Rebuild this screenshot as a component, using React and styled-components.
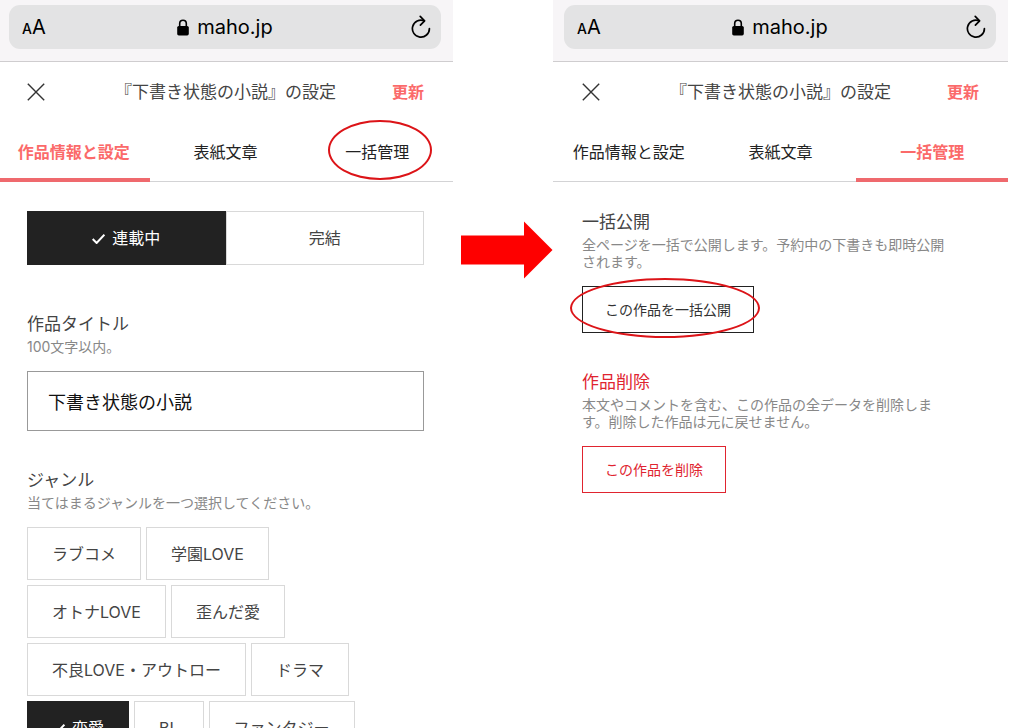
import React from 'react'
import styled, { createGlobalStyle, css } from 'styled-components'

const GlobalStyle = createGlobalStyle`
  * {
    box-sizing: border-box;
  }

  body {
    margin: 0;
    background: #fff;
    color: #444;
    font-family: Inter, 'Noto Sans CJK JP', sans-serif;
  }

  button,
  input {
    margin: 0;
    font-family: inherit;
  }
`

const Page = styled.div`
  display: grid;
  grid-template-columns: 453fr 100px 455fr;
  height: 100vh;
  padding-right: 7px;
  overflow: hidden;
`

const Phone = styled.section`
  min-width: 0;
  overflow: hidden;
`

const Screen = styled.div`
  margin-left: ${props => (props.$bleed ? '-2px' : '0')};
`

const BrowserBar = styled.div`
  padding: 5px 12px 12px 11px;
  background: #f7f5f7;
  border-bottom: 1px solid #cfcdcf;
`

const AddressBar = styled.div`
  display: grid;
  grid-template-columns: 1fr auto 1fr;
  align-items: center;
  height: 44px;
  padding: 0 10px 0 13px;
  border-radius: 11px;
  background: #e3e3e4;
  color: #000;
`

const BarButton = styled.button`
  display: flex;
  align-items: baseline;
  justify-self: ${props => (props.$end ? 'end' : 'start')};
  padding: ${props => (props.$end ? '0' : '2px 0 0')};
  border: 0;
  background: none;
  color: inherit;
  font-size: 20px;
  line-height: 24px;

  small {
    font-size: 14px;
    font-weight: 500;
  }
`

const Site = styled.span`
  display: flex;
  align-items: center;
  gap: 8px;
  padding-right: 3px;
  font-size: 20px;
  line-height: 24px;
`

const Header = styled.header`
  display: grid;
  grid-template-columns: 1fr auto 1fr;
  align-items: center;
  height: 60px;
  padding: 0 29px;
`

const Title = styled.h1`
  margin: 0;
  font-size: 17px;
  font-weight: 400;
  line-height: 24px;
`

const CloseButton = styled.button`
  display: flex;
  justify-self: start;
  padding: 0;
  border: 0;
  background: none;
  color: #333;
`

const UpdateButton = styled.button`
  justify-self: end;
  padding: 0;
  border: 0;
  background: none;
  color: #fb6a6a;
  font-size: 16px;
  font-weight: 700;
  line-height: 24px;
`

const TabList = styled.nav`
  display: grid;
  grid-template-columns: repeat(3, 1fr);
  height: 60px;
  box-shadow: inset 0 -1px #d3d3d5;
`

const Tab = styled.button`
  position: relative;
  padding: 4px 0 0;
  border: 0;
  border-bottom: 4px solid ${props => (props.$active ? '#ef696d' : 'transparent')};
  background: none;
  color: ${props => (props.$active ? '#fb6a6a' : '#222')};
  font-size: 16px;
  font-weight: ${props => (props.$active ? 700 : 400)};
  line-height: 24px;
`

const Ring = styled.span`
  position: absolute;
  inset: ${props => props.$inset};
  border: 2px solid #dc1418;
  border-radius: 50%;
  pointer-events: none;
`

const Content = styled.main`
  padding: ${props => props.$top} 29px 0;
`

const Segments = styled.div`
  display: grid;
  grid-template-columns: 1fr 1fr;
  margin-bottom: 47px;
`

const choice = css`
  display: flex;
  align-items: center;
  justify-content: center;
  gap: 7px;
  border: 1px solid ${props => (props.$selected ? '#222' : '#d9d9d9')};
  background: ${props => (props.$selected ? '#222' : '#fff')};
  color: ${props => (props.$selected ? '#fff' : '#444')};
  font-size: 16px;
  font-weight: 400;
  line-height: 24px;
`

const Segment = styled.button`
  ${choice}
  height: 54px;
  padding: 0;
`

const Chip = styled.button`
  ${choice}
  height: 53px;
  padding: 0 24px;
`

const ChipList = styled.div`
  display: flex;
  flex-wrap: wrap;
  gap: 5px;
  padding-right: 36px;
`

const Field = styled.div`
  margin-bottom: 37px;
`

const Label = styled.label`
  display: block;
  font-size: 17px;
  font-weight: 400;
  line-height: 24px;
`

const Heading = styled.h2`
  margin: 0;
  color: ${props => (props.$danger ? '#e0242f' : '#444')};
  font-size: 17px;
  font-weight: 400;
  line-height: 24px;
`

const Hint = styled.p`
  margin: 2px 0 16px;
  color: #888;
  font-size: 14px;
  line-height: 17px;
  white-space: nowrap;
`

const TextInput = styled.input`
  display: block;
  width: 100%;
  height: 60px;
  padding: 0 20px;
  border: 1px solid #999;
  border-radius: 0;
  background: #fff;
  color: #111;
  font-size: 18px;
`

const ActionButton = styled.button`
  display: block;
  position: relative;
  height: 47px;
  padding: 0 22px;
  border: 1px solid ${props => (props.$danger ? '#e0242f' : '#222')};
  background: #fff;
  color: ${props => (props.$danger ? '#e0242f' : '#333')};
  font-size: 14px;
  line-height: 24px;
`

const ArrowColumn = styled.div`
  display: flex;
  align-items: flex-start;
  justify-content: center;
  padding: 221px 0 0 8px;
`

const LockIcon = () => (
  <svg width="12" height="17" viewBox="0 0 12 17" aria-hidden="true">
    <path d="M2.7 8V4.6a3.3 3.3 0 0 1 6.6 0V8" fill="none" stroke="currentColor" strokeWidth="1.6" />
    <rect x="0.2" y="7" width="11.6" height="9.4" rx="1.6" fill="currentColor" />
  </svg>
)

const ReloadIcon = () => (
  <svg width="20" height="24" viewBox="0 0 20 24" fill="none" stroke="currentColor" strokeWidth="1.7" strokeLinecap="round" strokeLinejoin="round" aria-hidden="true">
    <path d="M18.4 13.6A8.5 8.5 0 1 1 13.2 5.8" />
    <path d="M9.2 1.4L13.6 5.8L9.4 10.2" />
  </svg>
)

const CloseIcon = () => (
  <svg width="18" height="18" viewBox="0 0 18 18" stroke="currentColor" strokeWidth="1.4" aria-hidden="true">
    <path d="M0.8 0.8L17.2 17.2M17.2 0.8L0.8 17.2" />
  </svg>
)

const CheckIcon = () => (
  <svg width="13" height="12" viewBox="0 0 13 12" fill="none" stroke="currentColor" strokeWidth="2" aria-hidden="true">
    <path d="M0.7 7L4.6 11L12.4 2.6" />
  </svg>
)

const Arrow = () => (
  <svg width="92" height="58" viewBox="0 0 92 58" aria-hidden="true">
    <path d="M0 14.5H63V0.5L91.5 29L63 57.5V43.5H0Z" fill="#fe0000" />
  </svg>
)

const tabs = ['作品情報と設定', '表紙文章', '一括管理']
const genres = [
  'ラブコメ',
  '学園LOVE',
  'オトナLOVE',
  '歪んだ愛',
  '不良LOVE・アウトロー',
  'ドラマ',
  '恋愛',
  'BL',
  'ファンタジー',
]

const PhoneScreen = ({ bleed, active, ringed, children }) => (
  <Phone>
    <Screen $bleed={bleed}>
      <BrowserBar>
        <AddressBar>
          <BarButton aria-label="表示設定">
            <small>A</small>A
          </BarButton>
          <Site>
            <LockIcon />
            maho.jp
          </Site>
          <BarButton $end aria-label="再読み込み">
            <ReloadIcon />
          </BarButton>
        </AddressBar>
      </BrowserBar>
      <Header>
        <CloseButton aria-label="閉じる">
          <CloseIcon />
        </CloseButton>
        <Title>『下書き状態の小説』の設定</Title>
        <UpdateButton>更新</UpdateButton>
      </Header>
      <TabList>
        {tabs.map(tab => (
          <Tab key={tab} $active={tab === active}>
            {tab}
            {tab === ringed && <Ring $inset="-2px 21px -2px 27px" />}
          </Tab>
        ))}
      </TabList>
      {children}
    </Screen>
  </Phone>
)

const WorkSettings = () => {
  const [status, setStatus] = React.useState('連載中')
  const [title, setTitle] = React.useState('下書き状態の小説')
  const [genre, setGenre] = React.useState('恋愛')
  return (
    <Content $top="29px">
      <Segments>
        {['連載中', '完結'].map(name => (
          <Segment
            key={name}
            $selected={name === status}
            aria-pressed={name === status}
            onClick={() => setStatus(name)}
          >
            {name === status && <CheckIcon />}
            {name}
          </Segment>
        ))}
      </Segments>
      <Field>
        <Label htmlFor="work-title">作品タイトル</Label>
        <Hint>100文字以内。</Hint>
        <TextInput id="work-title" value={title} onChange={e => setTitle(e.target.value)} />
      </Field>
      <Field>
        <Heading id="genre">ジャンル</Heading>
        <Hint>当てはまるジャンルを一つ選択してください。</Hint>
        <ChipList role="group" aria-labelledby="genre">
          {genres.map(name => (
            <Chip
              key={name}
              $selected={name === genre}
              aria-pressed={name === genre}
              onClick={() => setGenre(name)}
            >
              {name === genre && <CheckIcon />}
              {name}
            </Chip>
          ))}
        </ChipList>
      </Field>
    </Content>
  )
}

const BulkSettings = () => (
  <Content $top="28px">
    <Field>
      <Heading>一括公開</Heading>
      <Hint>
        全ページを一括で公開します。予約中の下書きも即時公開
        <br />
        されます。
      </Hint>
      <ActionButton>
        この作品を一括公開
        <Ring $inset="-9px -7px -6px -13px" />
      </ActionButton>
    </Field>
    <Field>
      <Heading $danger>作品削除</Heading>
      <Hint>
        本文やコメントを含む、この作品の全データを削除しま
        <br />
        す。削除した作品は元に戻せません。
      </Hint>
      <ActionButton $danger>この作品を削除</ActionButton>
    </Field>
  </Content>
)

const App = () => (
  <>
    <GlobalStyle />
    <Page>
      <PhoneScreen bleed active="作品情報と設定" ringed="一括管理">
        <WorkSettings />
      </PhoneScreen>
      <ArrowColumn>
        <Arrow />
      </ArrowColumn>
      <PhoneScreen active="一括管理">
        <BulkSettings />
      </PhoneScreen>
    </Page>
  </>
)

export default App
